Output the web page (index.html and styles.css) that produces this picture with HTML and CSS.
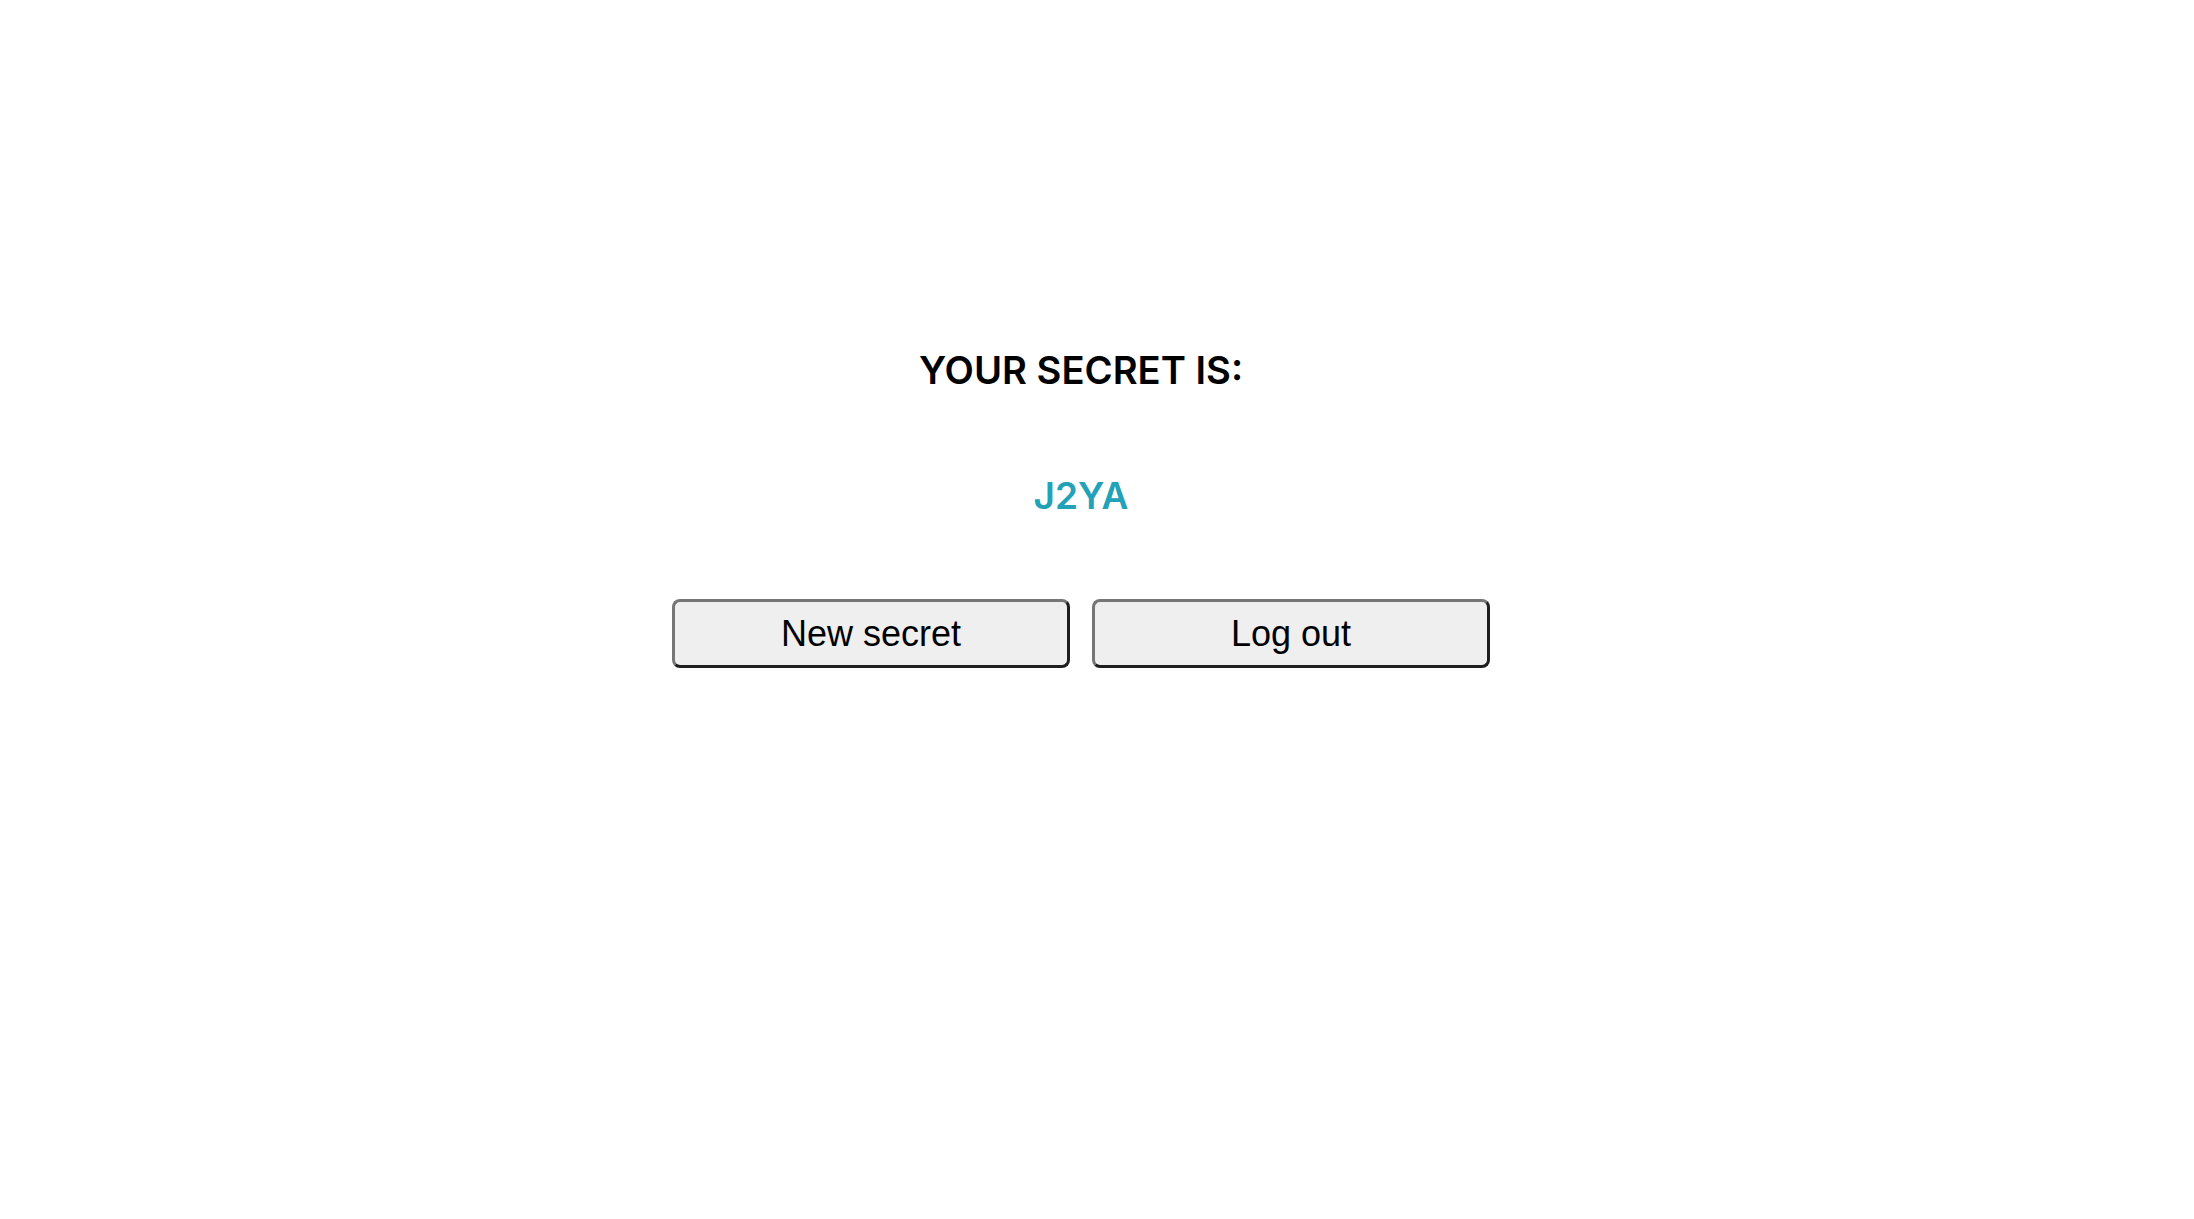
FILE: index.html
```html
<!DOCTYPE html>
<html>
<head>
<meta charset="utf-8">
<link rel="stylesheet" href="styles.css">
</head>
<body>
<main class="page">
  <h1 class="title">YOUR SECRET IS:</h1>
  <div class="secret">J2YA</div>
  <div class="actions">
    <button class="btn">New secret</button>
    <button class="btn">Log out</button>
  </div>
</main>
</body>
</html>
```
FILE: styles.css
```css
html, body {
  margin: 0;
  padding: 0;
  background: #ffffff;
}
.page {
  display: flex;
  flex-direction: column;
  align-items: center;
  padding: 347px 32px 0 0;
  font-family: Inter, "Liberation Sans", sans-serif;
}
.title {
  margin: 0;
  font-size: 38.2px;
  font-weight: 600;
  line-height: 46px;
  color: #000;
}
.secret {
  margin-top: 80px;
  font-size: 37px;
  font-weight: 600;
  line-height: 46px;
  color: #22a1b7;
}
.actions {
  display: flex;
  gap: 22px;
  margin-top: 80px;
}
.btn {
  width: 398px;
  height: 69px;
  box-sizing: border-box;
  border-width: 3.5px;
  border-style: solid;
  border-top-color: #767676;
  border-left-color: #767676;
  border-bottom-color: #1f1f1f;
  border-right-color: #1f1f1f;
  border-radius: 8px;
  background: #efefef;
  font-family: "Liberation Sans", Arial, sans-serif;
  font-size: 36px;
  color: #000;
  padding: 0;
}
```
